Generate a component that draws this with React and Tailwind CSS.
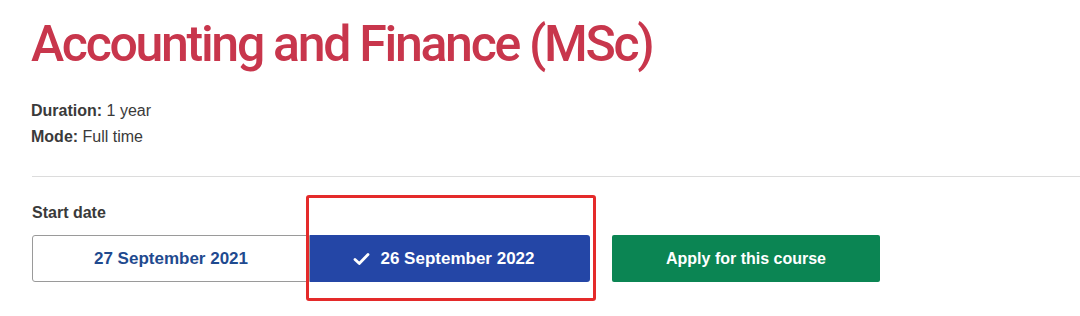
export default function App() {
  return (
    <div className="w-[1080px] h-[316px] bg-white overflow-hidden" style={{ fontFamily: '"Liberation Sans", Arial, sans-serif' }}>
      <div className="pl-[31px] pt-[12px]">
        <h1
          className="text-[50px] leading-[64px] font-medium text-[#c8364c] tracking-[-2.3px]"
          style={{ fontFamily: 'Roboto, "Liberation Sans", sans-serif' }}
        >
          Accounting and Finance (MSc)
        </h1>

        <div className="mt-[22px] text-[16px] leading-[26px] text-[#3a3a3a]">
          <p><span className="font-bold">Duration:</span> 1 year</p>
          <p><span className="font-bold">Mode:</span> Full time</p>
        </div>
      </div>

      <div className="ml-[32px] mt-[26px] border-t border-[#dcdcdc]" />

      <div className="pl-[32px] pt-[26px]">
        <div className="text-[16px] font-bold text-[#3a3a3a] leading-[20px]">Start date</div>

        <div className="mt-[12px] flex items-center">
          <div className="flex">
            <button className="w-[278px] h-[47px] border border-[#9a9a9a] rounded-l-[3px] bg-white text-[17px] font-bold text-[#1f4a8f]">
              27 September 2021
            </button>
            <div className="relative">
              <button className="w-[280px] h-[47px] bg-[#2446a6] rounded-r-[3px] text-[17px] font-bold text-white flex items-center justify-center gap-[10px] pr-[12px]">
                <svg width="17" height="14" viewBox="0 0 17 14" fill="none">
                  <path d="M2 7.5 L6.3 11.5 L15 2.5" stroke="white" strokeWidth="2.8" strokeLinecap="round" strokeLinejoin="round" />
                </svg>
                26 September 2022
              </button>
              <div className="absolute left-[-4px] top-[-40px] w-[290px] h-[106px] border-[3px] border-[#e42a2a] rounded-[3px] pointer-events-none" />
            </div>
          </div>

          <button className="ml-[22px] w-[268px] h-[47px] bg-[#0b8553] rounded-[2px] text-[16px] font-bold text-white">
            Apply for this course
          </button>
        </div>
      </div>
    </div>
  )
}
